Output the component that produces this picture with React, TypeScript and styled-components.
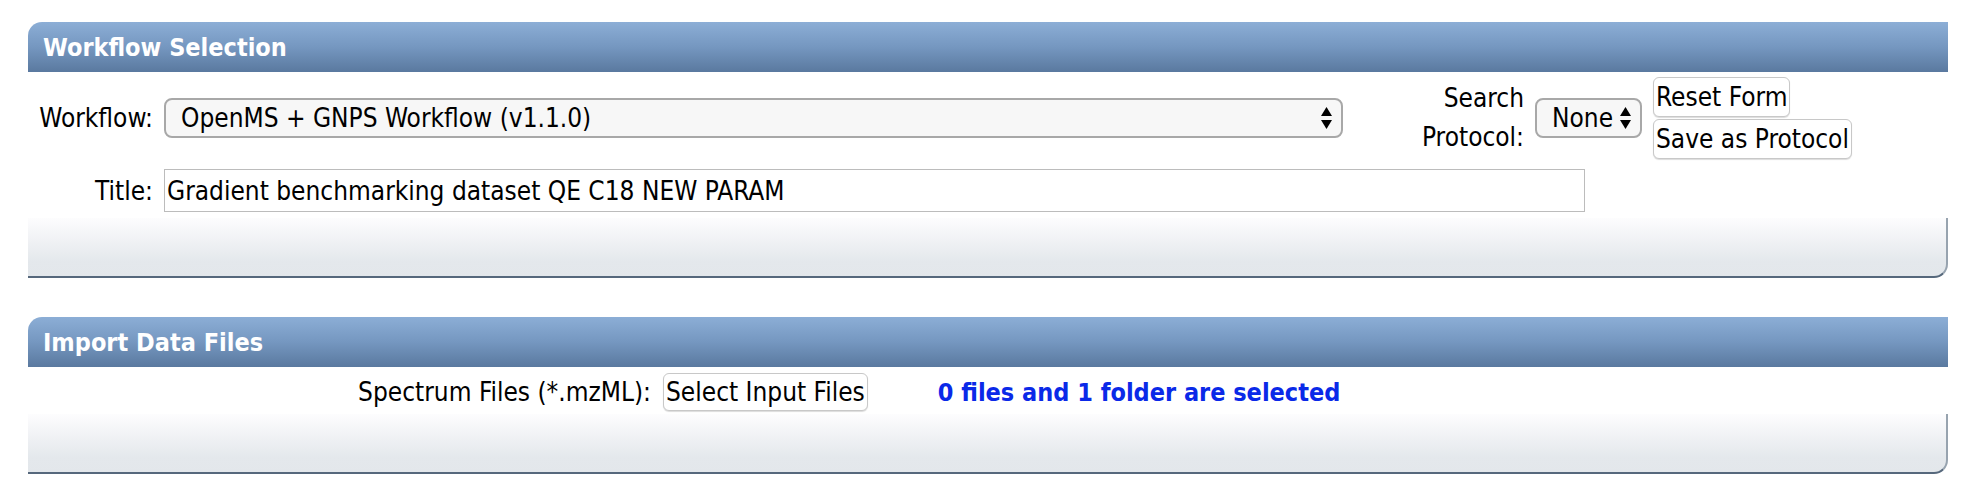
import React from "react";
import styled, { createGlobalStyle } from "styled-components";

const GlobalStyle = createGlobalStyle`
  html, body {
    margin: 0;
    padding: 0;
    background: #ffffff;
  }
  body {
    font-family: "DejaVu Sans Condensed", "DejaVu Sans", sans-serif;
    font-size: 26px;
    color: #000000;
  }
  * { box-sizing: border-box; }
`;

const Page = styled.div`
  padding: 22px 14px 0 28px;
  display: flex;
  flex-direction: column;
  gap: 39px;
`;

const Panel = styled.section`
  display: flex;
  flex-direction: column;
`;

const PanelHeader = styled.h2`
  margin: 0;
  height: 50px;
  display: flex;
  align-items: center;
  padding-left: 15px;
  background: linear-gradient(to bottom, #8caed6 0%, #7597c0 50%, #5a799f 100%);
  border-top-left-radius: 14px;
  color: #ffffff;
  font-size: 25px;
  font-weight: bold;
`;

const PanelBody = styled.div<{ $pt: number; $pb: number; $gap: number }>`
  display: flex;
  flex-direction: column;
  gap: ${(p) => p.$gap}px;
  padding: ${(p) => p.$pt}px 0 ${(p) => p.$pb}px 0;
  background: #ffffff;
`;

const PanelFooter = styled.div`
  height: 60px;
  background: linear-gradient(to bottom, #fdfdfe 0%, #eef0f3 45%, #e4e8ec 75%, #e3e7eb 100%);
  border-right: 2px solid #97a3af;
  border-bottom: 2px solid #56687c;
  border-bottom-right-radius: 14px;
`;

const Row = styled.div<{ $h: number }>`
  display: flex;
  align-items: center;
  height: ${(p) => p.$h}px;
`;

const Label = styled.label<{ $w: number }>`
  flex-shrink: 0;
  width: ${(p) => p.$w}px;
  text-align: right;
  white-space: nowrap;
`;

const StackedLabel = styled.label`
  flex-shrink: 0;
  width: 112px;
  margin-left: 69px;
  text-align: right;
  line-height: 39px;
`;

const SelectWrap = styled.div<{ $w: number; $ml: number }>`
  position: relative;
  flex-shrink: 0;
  width: ${(p) => p.$w}px;
  height: 40px;
  margin-left: ${(p) => p.$ml}px;
`;

const Select = styled.select<{ $pr: number }>`
  appearance: none;
  -webkit-appearance: none;
  width: 100%;
  height: 100%;
  border: 2px solid #a8a8a8;
  border-radius: 8px;
  background: #f7f7f7;
  font: inherit;
  color: #000000;
  padding: 0 ${(p) => p.$pr}px 0 15px;
  outline: none;
`;

const ArrowIcon = styled.svg`
  position: absolute;
  right: 11px;
  top: 50%;
  transform: translateY(-50%);
  pointer-events: none;
`;

const TextInput = styled.input`
  flex-shrink: 0;
  width: 1421px;
  height: 43px;
  margin-left: 11px;
  border: 1px solid #bcbcbc;
  border-radius: 0;
  padding: 0 2px;
  font: inherit;
  color: #000000;
  background: #ffffff;
  outline: none;
`;

const ButtonStack = styled.div`
  display: flex;
  flex-direction: column;
  align-items: flex-start;
  gap: 2px;
  margin-left: 11px;
`;

const Button = styled.button<{ $h: number; $ml?: number }>`
  flex-shrink: 0;
  height: ${(p) => p.$h}px;
  margin-left: ${(p) => p.$ml ?? 0}px;
  padding: 0 2px;
  font: inherit;
  color: #000000;
  background: #ffffff;
  border: 1px solid #c8c8c8;
  border-radius: 6px;
  box-shadow: 0 1px 1px rgba(0, 0, 0, 0.14);
  white-space: nowrap;
  cursor: pointer;
`;

const Status = styled.span`
  margin-left: 70px;
  color: #0a29e8;
  font-size: 25px;
  font-weight: bold;
  white-space: nowrap;
`;

const Arrows = () => (
  <ArrowIcon width="11" height="22" viewBox="0 0 11 22" aria-hidden="true">
    <polygon points="5.5,0 11,9 0,9" fill="#000" />
    <polygon points="0,13 11,13 5.5,22" fill="#000" />
  </ArrowIcon>
);

export default function App() {
  return (
    <>
      <GlobalStyle />
      <Page>
        <Panel>
          <PanelHeader>Workflow Selection</PanelHeader>
          <PanelBody $pt={5} $pb={6} $gap={11}>
            <Row $h={81}>
              <Label $w={125}>Workflow:</Label>
              <SelectWrap $w={1179} $ml={11}>
                <Select $pr={30} defaultValue="openms">
                  <option value="openms">OpenMS + GNPS Workflow (v1.1.0)</option>
                </Select>
                <Arrows />
              </SelectWrap>
              <StackedLabel>
                Search
                <br />
                Protocol:
              </StackedLabel>
              <SelectWrap $w={107} $ml={11}>
                <Select $pr={8} defaultValue="none">
                  <option value="none">None</option>
                </Select>
                <Arrows />
              </SelectWrap>
              <ButtonStack>
                <Button type="button" $h={40}>Reset Form</Button>
                <Button type="button" $h={40}>Save as Protocol</Button>
              </ButtonStack>
            </Row>
            <Row $h={43}>
              <Label $w={125}>Title:</Label>
              <TextInput
                type="text"
                defaultValue="Gradient benchmarking dataset QE C18 NEW PARAM"
              />
            </Row>
          </PanelBody>
          <PanelFooter />
        </Panel>

        <Panel>
          <PanelHeader>Import Data Files</PanelHeader>
          <PanelBody $pt={6} $pb={3} $gap={0}>
            <Row $h={38}>
              <Label $w={623}>Spectrum Files (*.mzML):</Label>
              <Button type="button" $h={38} $ml={12}>Select Input Files</Button>
              <Status>0 files and 1 folder are selected</Status>
            </Row>
          </PanelBody>
          <PanelFooter />
        </Panel>
      </Page>
    </>
  );
}
